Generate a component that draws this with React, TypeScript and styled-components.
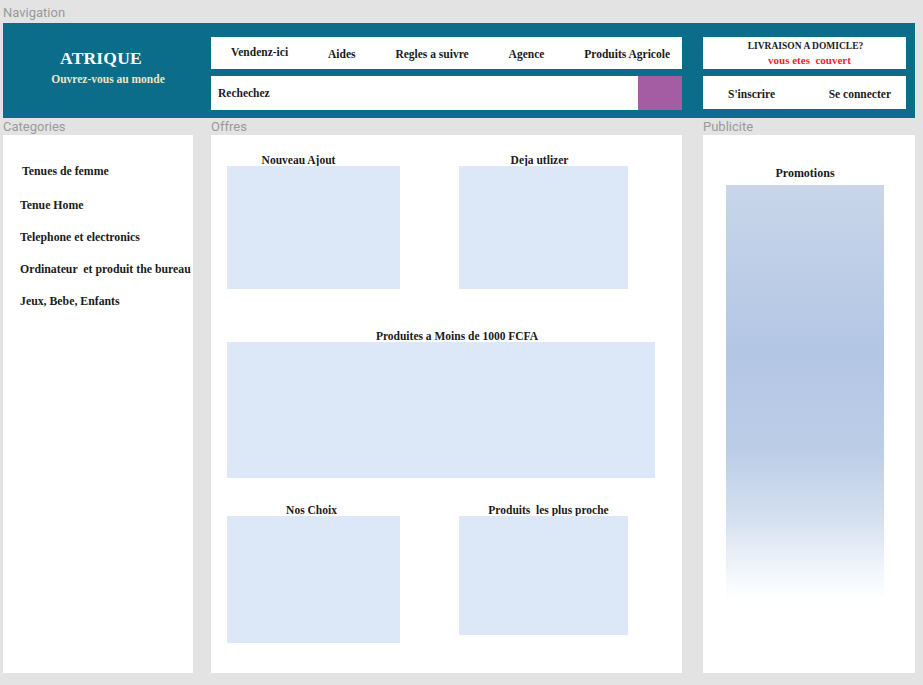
import styled, { createGlobalStyle } from 'styled-components';

const GlobalStyle = createGlobalStyle`
  html, body {
    margin: 0;
    padding: 0;
    background: #e3e3e3;
  }
`;

const serif = `'Liberation Serif', 'Times New Roman', serif`;

const Page = styled.div`
  width: 923px;
  height: 685px;
  box-sizing: border-box;
  padding: 0 8px 12px 3px;
  display: flex;
  flex-direction: column;
  background: #e3e3e3;
  overflow: hidden;
`;

const SectionLabel = styled.div<{ $top?: number; $height?: number }>`
  font-family: Roboto, 'Liberation Sans', sans-serif;
  font-size: 13px;
  line-height: 17px;
  color: #9a9a9a;
  padding-top: ${props => props.$top || 0}px;
  height: ${props => props.$height || 17}px;
  box-sizing: border-box;
  white-space: nowrap;
`;

/* ---------- navigation ---------- */

const NavBar = styled.header`
  height: 95px;
  background: #0c6d8a;
  display: flex;
  align-items: flex-start;
  padding-top: 14px;
  box-sizing: border-box;
`;

const Brand = styled.div`
  width: 208px;
  display: flex;
  flex-direction: column;
  align-items: center;
  padding-top: 12px;
  padding-right: 12px;
  box-sizing: border-box;
`;

const BrandName = styled.div`
  font-family: ${serif};
  font-weight: 700;
  font-size: 17.5px;
  line-height: 18px;
  color: #ffffff;
  letter-spacing: 0.2px;
`;

const BrandTagline = styled.div`
  font-family: ${serif};
  font-weight: 700;
  font-size: 11.5px;
  line-height: 14px;
  margin-top: 5px;
  padding-left: 14px;
  color: #ece5c2;
`;

const MainNav = styled.div`
  width: 471px;
  display: flex;
  flex-direction: column;
  gap: 7px;
`;

const MenuBar = styled.nav`
  height: 32px;
  background: #ffffff;
  display: flex;
  align-items: center;
  justify-content: space-between;
  padding: 0 12px 0 20px;
  box-sizing: border-box;
`;

const MenuItem = styled.span<{ $lift?: boolean }>`
  font-family: ${serif};
  font-weight: 700;
  font-size: 11.5px;
  color: #1b1b1b;
  white-space: nowrap;
  margin-top: ${props => (props.$lift ? -3 : 1)}px;
`;

const SearchBar = styled.div`
  height: 34px;
  background: #ffffff;
  display: flex;
  align-items: stretch;
`;

const SearchText = styled.div`
  flex: 1;
  display: flex;
  align-items: center;
  padding-left: 7px;
  font-family: ${serif};
  font-weight: 700;
  font-size: 11.5px;
  color: #1b1b1b;
`;

const SearchButton = styled.button`
  width: 44px;
  border: none;
  padding: 0;
  background: #a45ca2;
`;

const Account = styled.div`
  width: 203px;
  margin-left: 21px;
  display: flex;
  flex-direction: column;
  gap: 7px;
`;

const DeliveryBox = styled.div`
  height: 32px;
  background: #ffffff;
  display: flex;
  flex-direction: column;
  align-items: center;
  justify-content: center;
  gap: 2px;
  padding-left: 2px;
  box-sizing: border-box;
`;

const DeliveryTitle = styled.div`
  font-family: ${serif};
  font-weight: 700;
  font-size: 9.5px;
  line-height: 11px;
  color: #1b1b1b;
`;

const DeliveryNote = styled.div`
  font-family: ${serif};
  font-weight: 700;
  font-size: 11px;
  line-height: 12px;
  color: #e8262d;
  white-space: pre;
  padding-left: 8px;
`;

const AuthBox = styled.div`
  height: 33px;
  background: #ffffff;
  display: flex;
  align-items: center;
  justify-content: space-between;
  padding: 2px 15px 0 25px;
  box-sizing: border-box;
`;

const AuthLink = styled.span`
  font-family: ${serif};
  font-weight: 700;
  font-size: 11.5px;
  color: #1b1b1b;
  white-space: nowrap;
`;

/* ---------- content ---------- */

const Content = styled.div`
  display: flex;
  flex: 1;
`;

const Column = styled.section<{ $width: number; $offset?: number }>`
  width: ${props => props.$width}px;
  margin-left: ${props => props.$offset || 0}px;
  display: flex;
  flex-direction: column;
`;

const Panel = styled.div`
  flex: 1;
  background: #ffffff;
  box-sizing: border-box;
`;

const CategoryList = styled.ul`
  list-style: none;
  margin: 0;
  padding: 30px 0 0 17px;
  display: flex;
  flex-direction: column;
  gap: 20px;
`;

const CategoryItem = styled.li<{ $first?: boolean }>`
  font-family: ${serif};
  font-weight: 700;
  font-size: 11.8px;
  line-height: 12px;
  color: #1b1b1b;
  white-space: pre;
  padding-left: ${props => (props.$first ? 2 : 0)}px;
  margin-bottom: ${props => (props.$first ? 2 : 0)}px;
`;

const OffersPanel = styled(Panel)`
  padding: 19px 0 0 16px;
  display: flex;
  flex-direction: column;
`;

const OfferRow = styled.div<{ $top: number }>`
  display: flex;
  gap: 59px;
  margin-top: ${props => props.$top}px;
`;

const OfferCard = styled.div<{ $width: number }>`
  width: ${props => props.$width}px;
  display: flex;
  flex-direction: column;
`;

const CardTitle = styled.div<{ $nudge: number }>`
  font-family: ${serif};
  font-weight: 700;
  font-size: 11.5px;
  line-height: 12px;
  color: #1b1b1b;
  text-align: center;
  white-space: pre;
  padding-left: ${props => Math.max(0, props.$nudge * 2)}px;
  padding-right: ${props => Math.max(0, -props.$nudge * 2)}px;
`;

const CardImage = styled.div<{ $height: number }>`
  height: ${props => props.$height}px;
  background: #dce8f7;
`;

const PromoPanel = styled(Panel)`
  padding: 32px 0 0 23px;
`;

const PromoTitle = styled.div`
  width: 158px;
  font-family: ${serif};
  font-weight: 700;
  font-size: 12px;
  line-height: 12px;
  color: #1b1b1b;
  text-align: center;
  margin-bottom: 6px;
`;

const PromoBanner = styled.div`
  width: 158px;
  height: 415px;
  background: linear-gradient(
    180deg,
    #c9d6ea 0%,
    #b3c6e4 40%,
    #bccde7 64%,
    #d6e1f0 81%,
    #f0f4fa 92%,
    #ffffff 100%
  );
`;

type Offer = { title: string; width: number; height: number; nudge: number };

const offerRows: { top: number; cards: Offer[] }[] = [
  {
    top: 0,
    cards: [
      { title: 'Nouveau Ajout', width: 173, height: 123, nudge: -15 },
      { title: 'Deja utlizer', width: 169, height: 123, nudge: -4 },
    ],
  },
  {
    top: 41,
    cards: [{ title: 'Produites a Moins de 1000 FCFA', width: 428, height: 136, nudge: 16 }],
  },
  {
    top: 26,
    cards: [
      { title: 'Nos Choix', width: 173, height: 127, nudge: -2 },
      { title: 'Produits  les plus proche', width: 169, height: 119, nudge: 5 },
    ],
  },
];

const categories = [
  'Tenues de femme',
  'Tenue Home',
  'Telephone et electronics',
  'Ordinateur  et produit the bureau',
  'Jeux, Bebe, Enfants',
];

const App = (): JSX.Element => {
  return (
    <>
      <GlobalStyle />
      <Page>
        <SectionLabel $top={4} $height={23}>
          Navigation
        </SectionLabel>
        <NavBar>
          <Brand>
            <BrandName>ATRIQUE</BrandName>
            <BrandTagline>Ouvrez-vous au monde</BrandTagline>
          </Brand>

          <MainNav>
            <MenuBar>
              <MenuItem $lift>Vendenz-ici</MenuItem>
              <MenuItem>Aides</MenuItem>
              <MenuItem>Regles a suivre</MenuItem>
              <MenuItem>Agence</MenuItem>
              <MenuItem>Produits Agricole</MenuItem>
            </MenuBar>
            <SearchBar>
              <SearchText>Rechechez</SearchText>
              <SearchButton aria-label="rechercher" />
            </SearchBar>
          </MainNav>

          <Account>
            <DeliveryBox>
              <DeliveryTitle>LIVRAISON A DOMICLE?</DeliveryTitle>
              <DeliveryNote>vous etes  couvert</DeliveryNote>
            </DeliveryBox>
            <AuthBox>
              <AuthLink>S'inscrire</AuthLink>
              <AuthLink>Se connecter</AuthLink>
            </AuthBox>
          </Account>
        </NavBar>

        <Content>
          <Column $width={190}>
            <SectionLabel>Categories</SectionLabel>
            <Panel>
              <CategoryList>
                {categories.map((c, i) => (
                  <CategoryItem key={c} $first={i === 0}>
                    {c}
                  </CategoryItem>
                ))}
              </CategoryList>
            </Panel>
          </Column>

          <Column $width={471} $offset={18}>
            <SectionLabel>Offres</SectionLabel>
            <OffersPanel>
              {offerRows.map((row, i) => (
                <OfferRow key={i} $top={row.top}>
                  {row.cards.map(card => (
                    <OfferCard key={card.title} $width={card.width}>
                      <CardTitle $nudge={card.nudge}>{card.title}</CardTitle>
                      <CardImage $height={card.height} />
                    </OfferCard>
                  ))}
                </OfferRow>
              ))}
            </OffersPanel>
          </Column>

          <Column $width={212} $offset={21}>
            <SectionLabel>Publicite</SectionLabel>
            <PromoPanel>
              <PromoTitle>Promotions</PromoTitle>
              <PromoBanner />
            </PromoPanel>
          </Column>
        </Content>
      </Page>
    </>
  );
};

export default App;
